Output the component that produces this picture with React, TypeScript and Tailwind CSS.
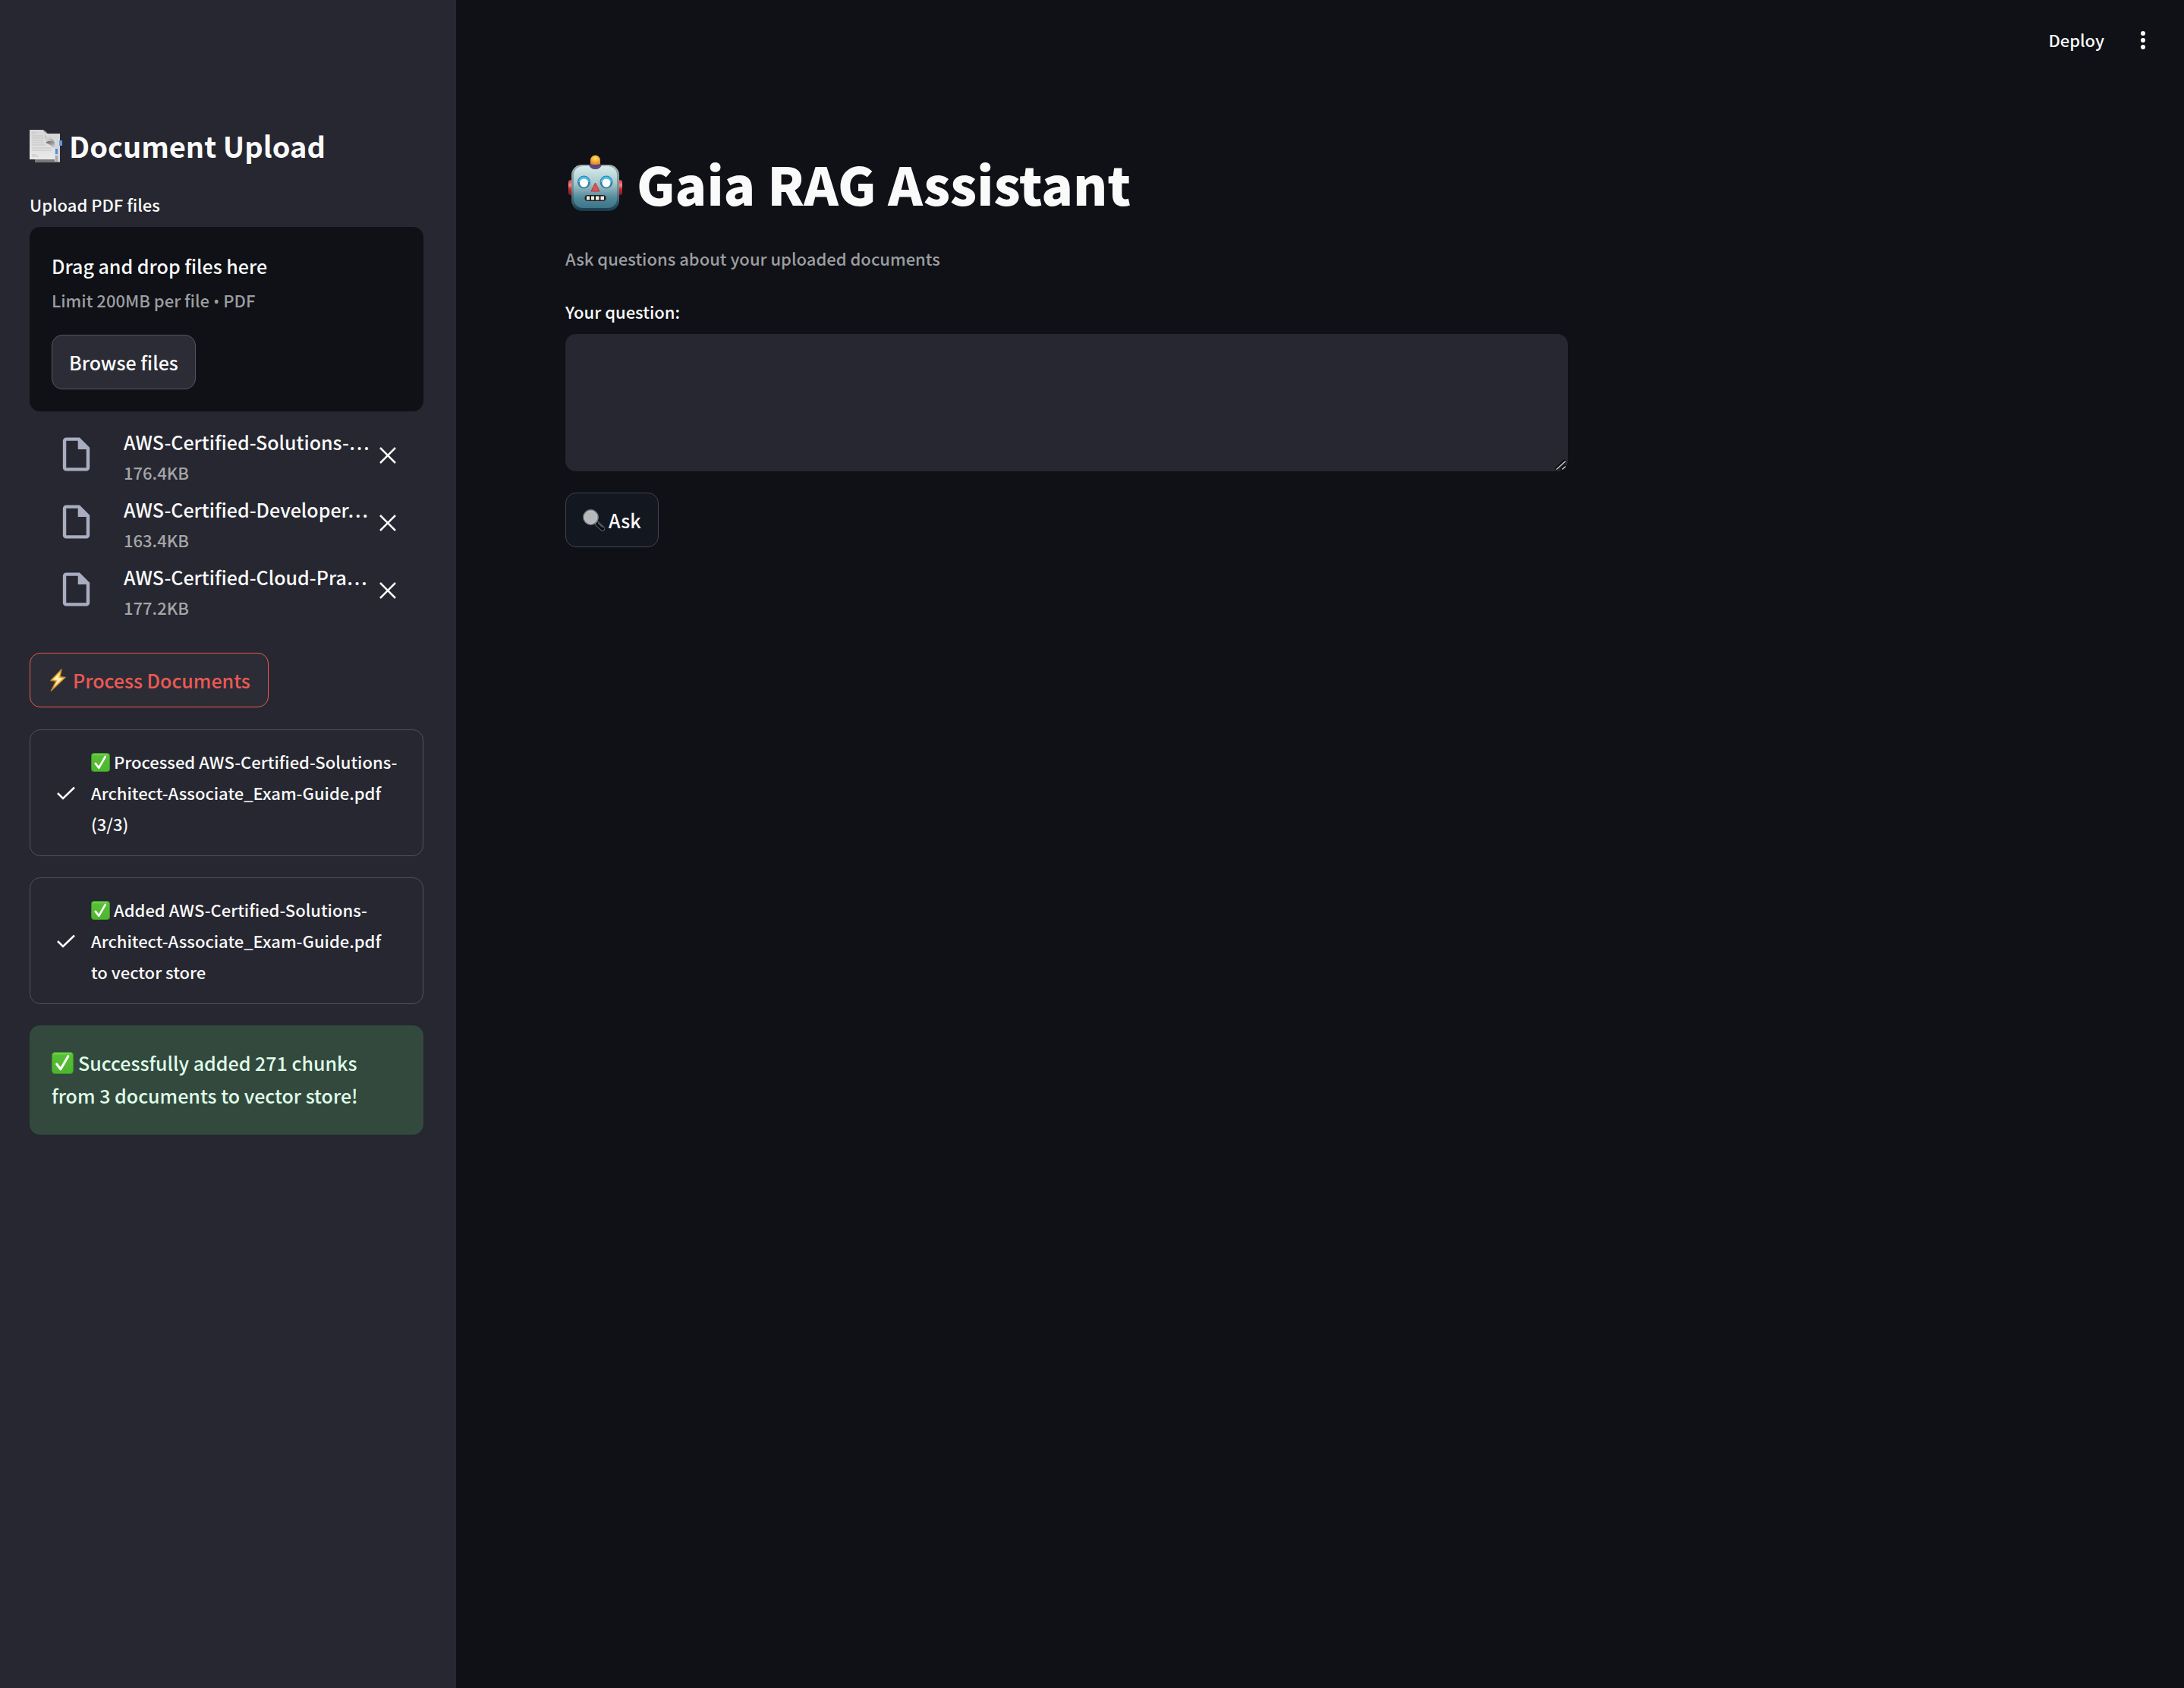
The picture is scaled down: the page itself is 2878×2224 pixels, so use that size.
import type { ReactNode } from "react";

const files = [
  { name: "AWS-Certified-Solutions-…", size: "176.4KB" },
  { name: "AWS-Certified-Developer…", size: "163.4KB" },
  { name: "AWS-Certified-Cloud-Pra…", size: "177.2KB" },
];

function PagesEmoji() {
  return (
    <svg viewBox="0 0 43 43" className="size-[43px] shrink-0" aria-hidden="true">
      <defs>
        <linearGradient id="page" x1="0" y1="0" x2="0" y2="1">
          <stop offset="0" stopColor="#d6d6d6" />
          <stop offset="1" stopColor="#e9e9e9" />
        </linearGradient>
        <linearGradient id="curl" x1="0.2" y1="0" x2="0.8" y2="1">
          <stop offset="0" stopColor="#8f8f8f" />
          <stop offset="0.35" stopColor="#e2e2e2" />
          <stop offset="0.7" stopColor="#c4c4c4" />
          <stop offset="1" stopColor="#8a8a8a" />
        </linearGradient>
        <linearGradient id="shade" x1="0" y1="0" x2="0.5" y2="1">
          <stop offset="0" stopColor="#5a5a5a" />
          <stop offset="1" stopColor="#d8d8d8" />
        </linearGradient>
      </defs>
      <rect x="7" y="36" width="33" height="7" fill="#77787b" />
      <path d="M20 5h20v37h-7V20z" fill="#d6d6d6" />
      <path d="M0 0h18c4 3 3 8 4 13 5 0 9 2 11 6v20H0z" fill="url(#page)" />
      <path d="M21 17c5-4 10-2 12 1v8c-4-5-7-7-12-9z" fill="url(#shade)" />
      <path d="M17 0c5 1 7 6 9 9 4 2 6 5 7 9-3-3-7-4-12-3 2-6 0-12-4-15z" fill="url(#curl)" />
      <path d="M3 4h6M3 8h15M3 11h16M3 14h16M3 17h16M3 20h18M3 24h26M3 27h26M3 33h6M3 35h9" stroke="#c2c2c2" strokeWidth="1" />
      <rect x="34" y="25" width="3" height="7" fill="#4d8fe8" />
      <rect x="39" y="14" width="4" height="7" fill="#5d97ea" />
      <path d="M34 34h3v8h-3z" fill="#a9a9a9" />
    </svg>
  );
}

function RobotEmoji() {
  return (
    <svg viewBox="0 0 71 74" className="h-[74px] w-[71px] shrink-0" aria-hidden="true">
      <defs>
        <linearGradient id="head" x1="0" y1="0" x2="0" y2="1">
          <stop offset="0" stopColor="#d7ecec" />
          <stop offset="0.4" stopColor="#a9c9cd" />
          <stop offset="0.75" stopColor="#528a9b" />
          <stop offset="1" stopColor="#3d7488" />
        </linearGradient>
        <linearGradient id="rim" x1="0" y1="0" x2="0" y2="1">
          <stop offset="0" stopColor="#a5b3b5" />
          <stop offset="0.5" stopColor="#6b9099" />
          <stop offset="1" stopColor="#173a4b" />
        </linearGradient>
        <radialGradient id="bulb" cx="0.5" cy="0.35" r="0.6">
          <stop offset="0" stopColor="#ffe45c" />
          <stop offset="1" stopColor="#e8892a" />
        </radialGradient>
        <linearGradient id="ear" x1="0" y1="0" x2="0" y2="1">
          <stop offset="0" stopColor="#d92f35" />
          <stop offset="0.35" stopColor="#f08a88" />
          <stop offset="0.6" stopColor="#c9292f" />
          <stop offset="1" stopColor="#7f1820" />
        </linearGradient>
      </defs>
      <rect x="0" y="33" width="9" height="20" rx="3" fill="url(#ear)" />
      <rect x="62" y="33" width="9" height="20" rx="3" fill="url(#ear)" />
      <rect x="4" y="13" width="63" height="61" rx="14" fill="url(#rim)" />
      <rect x="7" y="15" width="57" height="55" rx="12" fill="url(#head)" />
      <path d="M27 13q8-4 17 0-2 6-8.500 6T27 13z" fill="#594878" />
      <path d="M29 7a6.500 6.500 0 0 1 13 0v5q-6.500 2-13 0z" fill="url(#bulb)" />
      <circle cx="20.500" cy="36" r="8.500" fill="#3a7fa0" />
      <path d="M13 36a7.500 7.500 0 0 1 15 0" fill="#45bfe8" />
      <circle cx="20.500" cy="37" r="5.500" fill="#fff" />
      <circle cx="50" cy="36" r="8.500" fill="#3a7fa0" />
      <path d="M42.500 36a7.500 7.500 0 0 1 15 0" fill="#45bfe8" />
      <circle cx="50" cy="37" r="5.500" fill="#fff" />
      <path d="M35.500 37l5.500 11H30z" fill="#df5452" stroke="#a83b42" strokeWidth="1" strokeLinejoin="round" />
      <rect x="21.500" y="53" width="28" height="8" rx="4" fill="#1f1d1e" />
      <path d="M24 54.500h4v5h-4zM30 54.500h4v5h-4zM36 54.500h4.500v5H36zM42.500 54.500H47v5h-4.500z" fill="#efeae2" />
    </svg>
  );
}

function CheckEmoji({ className }: { className: string }) {
  return (
    <svg viewBox="0 0 28 28" className={className} aria-hidden="true">
      <defs>
        <linearGradient id="tick-box" x1="0" y1="0" x2="0" y2="1">
          <stop offset="0" stopColor="#7fd75b" />
          <stop offset="0.15" stopColor="#57bf35" />
          <stop offset="1" stopColor="#4fb530" />
        </linearGradient>
      </defs>
      <rect x="0.500" y="0.500" width="27" height="27" rx="4" fill="url(#tick-box)" stroke="#3c9526" />
      <path d="M6.500 15.500l5 6.500L21 5.500" fill="none" stroke="#fff" strokeWidth="3" strokeLinecap="round" strokeLinejoin="round" />
    </svg>
  );
}

function BoltEmoji() {
  return (
    <svg viewBox="0 0 21 30" className="h-[30px] w-[21px] shrink-0" aria-hidden="true">
      <path d="M15 1L1 15.500l7 .7L1.500 29 20 11.500l-7-.8z" fill="#f9d765" stroke="#cf8a2c" strokeWidth="1.400" strokeLinejoin="round" />
      <path d="M12 6l-7.500 8 6 .8L6 23l9.500-10-5.500-.6z" fill="#fff6c4" />
    </svg>
  );
}

function MagnifierEmoji() {
  return (
    <svg viewBox="0 0 29 29" className="size-[29px] shrink-0" aria-hidden="true">
      <path d="M19 19l7 6.500" stroke="#5d6067" strokeWidth="6.500" strokeLinecap="round" />
      <path d="M19.500 19.500l6.500 6" stroke="#0b0c0f" strokeWidth="4.500" strokeLinecap="round" />
      <path d="M20.500 18.500l5.500 5" stroke="#63666d" strokeWidth="1.200" strokeLinecap="round" />
      <circle cx="10.500" cy="10.500" r="9.300" fill="#b7b8b9" stroke="#7d858c" strokeWidth="2.200" />
      <circle cx="10.500" cy="10.500" r="8.300" fill="none" stroke="#d7dade" strokeWidth="0.800" />
    </svg>
  );
}

function FileIcon() {
  return (
    <svg viewBox="0 0 24 24" fill="#a9adc1" className="mt-3 size-[53px] shrink-0 self-start" aria-hidden="true">
      <path d="M14 2H6c-1.100 0-1.990.9-1.990 2L4 20c0 1.100.89 2 1.990 2H18c1.100 0 2-.9 2-2V8l-6-6zM6 20V4h7v5h5v11H6z" />
    </svg>
  );
}

function CloseIcon() {
  return (
    <svg viewBox="0 0 22 22" fill="none" stroke="currentColor" strokeWidth="2.500" className="size-[22px]" aria-hidden="true">
      <path d="M1 1l20 20M21 1L1 21" />
    </svg>
  );
}

function TickIcon() {
  return (
    <svg viewBox="0 0 24 18" fill="none" stroke="currentColor" strokeWidth="2.600" className="h-[18px] w-[24px] shrink-0" aria-hidden="true">
      <path d="M1 9l7 7L23 1.500" />
    </svg>
  );
}

function Status({ children }: { children: ReactNode }) {
  return (
    <div role="status" className="flex items-center gap-[21px] rounded-[14px] border border-[#50515a] pt-[21px] pr-[29px] pb-[21px] pl-[35px]">
      <TickIcon />
      <p className="text-[22px] leading-[41px]">
        <CheckEmoji className="mr-[5px] inline-block size-[25px] align-[-4px]" />
        {children}
      </p>
    </div>
  );
}

export default function App() {
  return (
    <div className="flex min-h-screen bg-[#0f1116] font-['Noto_Sans_CJK_SC','Source_Sans_Pro',sans-serif] font-medium text-[#fafafa]">
      <aside className="w-[601px] shrink-0 bg-[#262730] pt-[166px] pr-[43px] pl-[39px]">
        <h2 className="flex items-center gap-[9px] text-[38px] leading-[52px] font-bold">
          <PagesEmoji />
          Document Upload
        </h2>

        <label htmlFor="pdf-files" className="mt-[33px] block text-[22px] leading-[36px]">
          Upload PDF files
        </label>
        <section className="mt-3 rounded-[14px] bg-[#0f1116] p-[29px]">
          <p className="text-[25px] leading-[44px]">Drag and drop files here</p>
          <p className="mt-[5px] text-[22px] leading-[36px] text-[#9c9da0]">
            Limit 200MB per file <span className="font-['Open_Sans',sans-serif] leading-none">•</span> PDF
          </p>
          <input id="pdf-files" type="file" accept=".pdf" multiple className="hidden" />
          <button type="button" className="mt-7 flex h-[72px] items-center rounded-[14px] border border-[#555660] bg-[#2b2c36] px-[22px] text-[25px] leading-[44px]">
            Browse files
          </button>
        </section>

        <ul className="mt-[18px] flex flex-col gap-[9px] pr-[36px] pl-[35px]">
          {files.map((file) => (
            <li key={file.name} className="flex items-center">
              <FileIcon />
              <div className="ml-[36px] min-w-0 grow">
                <p className="text-[25px] leading-[44px] whitespace-nowrap">{file.name}</p>
                <p className="text-[22px] leading-[36px] text-[#a5a5a9]">{file.size}</p>
              </div>
              <button type="button" aria-label={`Remove ${file.name}`} className="shrink-0">
                <CloseIcon />
              </button>
            </li>
          ))}
        </ul>

        <button type="button" className="mt-[42px] flex h-[72px] items-center gap-[9px] rounded-[14px] border border-[#ec5953] bg-[#2b2c36] pr-[23px] pl-[26px] text-[25px] leading-[44px] text-[#ec5953]">
          <BoltEmoji />
          Process Documents
        </button>

        <div className="mt-[29px] flex flex-col gap-7">
          <Status>Processed AWS-Certified-Solutions-Architect-Associate_Exam-Guide.pdf (3/3)</Status>
          <Status>Added AWS-Certified-Solutions-Architect-Associate_Exam-Guide.pdf to vector store</Status>
          <p role="alert" className="rounded-[14px] bg-[#34493e] px-[29px] pt-7 pb-[30px] text-[25px] leading-[43px] text-[#dffde9]">
            <CheckEmoji className="mr-[6px] inline-block size-[29px] align-[-4px]" />
            Successfully added 271 chunks from 3 documents to vector store!
          </p>
        </div>
      </aside>

      <main className="min-w-0 grow">
        <header className="flex h-[106px] items-center justify-end gap-[40px] pr-[43px]">
          <button type="button" className="pb-[2px] text-[22px] leading-[36px]">Deploy</button>
          <button type="button" aria-label="Main menu" className="flex w-[22px] justify-center">
            <svg viewBox="0 0 6 24" fill="currentColor" className="h-[24px] w-[6px]" aria-hidden="true">
              <circle cx="3" cy="3" r="3" />
              <circle cx="3" cy="12" r="3" />
              <circle cx="3" cy="21" r="3" />
            </svg>
          </button>
        </header>

        <div className="w-full max-w-[1609px] px-[144px] pt-[88px]">
          <h1 className="flex items-center gap-[19px] text-[69px] leading-[95px] font-black">
            <span className="pb-[2px] pl-[4px]">
              <RobotEmoji />
            </span>
            Gaia RAG Assistant
          </h1>
          <p className="mt-[31px] text-[22px] leading-[40px] text-[#9c9da0]">Ask questions about your uploaded documents</p>

          <label htmlFor="question" className="mt-8 block text-[22px] leading-[36px]">
            Your question:
          </label>
          <div className="relative mt-3">
            <textarea id="question" className="block h-[181px] w-full resize-none rounded-[14px] bg-[#262730] p-[22px] text-[25px] leading-[40px] outline-none" />
            <svg viewBox="0 0 15 15" className="pointer-events-none absolute right-[2px] bottom-[1px] size-[15px]" aria-hidden="true">
              <path d="M1 13.500L14 1.500M8 14l6-5.500" stroke="#08090b" strokeWidth="4" />
              <path d="M2 13.500L14 2.500M9.500 13.500l4.500-4" stroke="#c9cacb" strokeWidth="1.600" />
            </svg>
          </div>

          <button type="button" className="mt-7 flex h-[72px] items-center gap-[5px] rounded-[14px] border border-[#41444c] bg-[#131720] px-[22px] text-[25px] leading-[44px]">
            <MagnifierEmoji />
            Ask
          </button>
        </div>
      </main>
    </div>
  );
}
